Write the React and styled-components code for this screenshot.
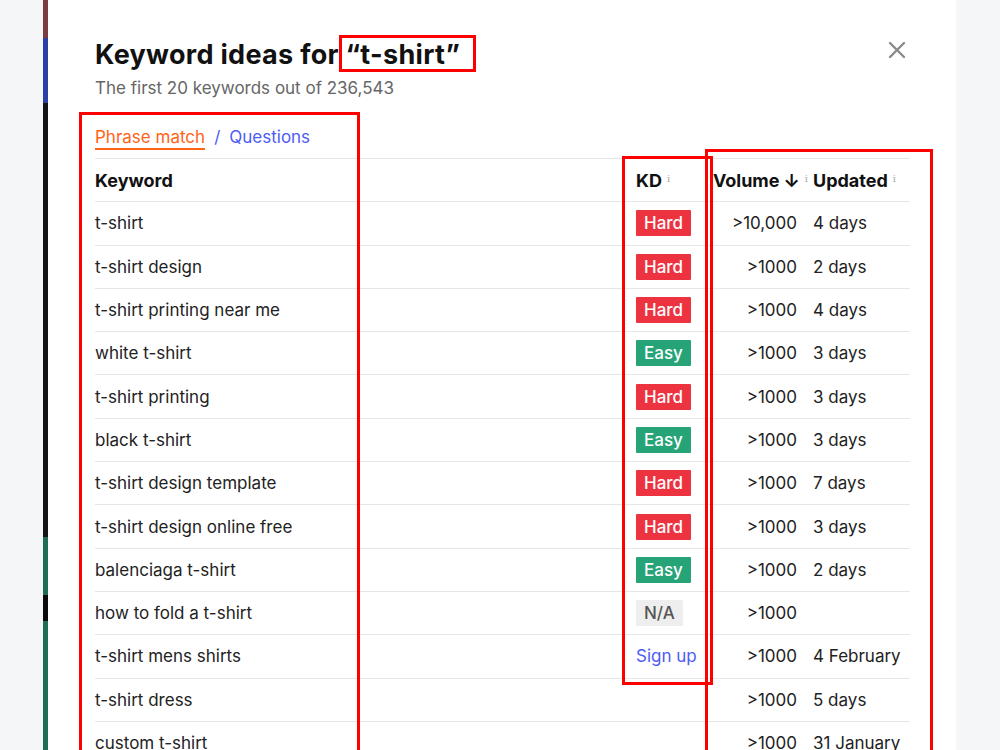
import React from 'react';
import styled, { createGlobalStyle } from 'styled-components';

const GlobalStyle = createGlobalStyle`
  html, body {
    margin: 0;
    padding: 0;
    background: #f5f6f8;
    font-family: Inter, "Noto Sans", "Liberation Sans", sans-serif;
    color: #1c1c1c;
  }
`;

const keywords = [
  { name: 't-shirt', kd: 'hard', volume: '>10,000', updated: '4 days' },
  { name: 't-shirt design', kd: 'hard', volume: '>1000', updated: '2 days' },
  { name: 't-shirt printing near me', kd: 'hard', volume: '>1000', updated: '4 days' },
  { name: 'white t-shirt', kd: 'easy', volume: '>1000', updated: '3 days' },
  { name: 't-shirt printing', kd: 'hard', volume: '>1000', updated: '3 days' },
  { name: 'black t-shirt', kd: 'easy', volume: '>1000', updated: '3 days' },
  { name: 't-shirt design template', kd: 'hard', volume: '>1000', updated: '7 days' },
  { name: 't-shirt design online free', kd: 'hard', volume: '>1000', updated: '3 days' },
  { name: 'balenciaga t-shirt', kd: 'easy', volume: '>1000', updated: '2 days' },
  { name: 'how to fold a t-shirt', kd: 'na', volume: '>1000', updated: '' },
  { name: 't-shirt mens shirts', kd: 'signup', volume: '>1000', updated: '4 February' },
  { name: 't-shirt dress', kd: null, volume: '>1000', updated: '5 days' },
  { name: 'custom t-shirt', kd: null, volume: '>1000', updated: '31 January' },
];

// segments of the page peeking out behind the modal
const stripSegments = [
  { color: '#7a3c40', height: 38 },
  { color: '#2b3fa6', height: 65 },
  { color: '#141414', height: 434 },
  { color: '#1f6d55', height: 58 },
  { color: '#0c0c0c', height: 26 },
  { color: '#1f6d55', height: 129 },
];

// red annotation frames drawn over the screenshot
const frames = [
  { left: 339, top: 35, width: 137, height: 37 },
  { left: 79, top: 112, width: 281, height: 660 },
  { left: 622, top: 156, width: 91, height: 529 },
  { left: 705, top: 149, width: 228, height: 620 },
];

const App = () => {
  return (
    <>
      <GlobalStyle />
      <Page>
        <LeftGutter />
        <Strip>
          {stripSegments.map((s, i) => (
            <StripSegment key={i} $color={s.color} $height={s.height} />
          ))}
        </Strip>
        <Modal>
          <Header>
            <div>
              <Title>
                Keyword ideas for <Quoted>“t-shirt”</Quoted>
              </Title>
              <Subtitle>The first 20 keywords out of 236,543</Subtitle>
            </div>
            <CloseButton aria-label="Close">
              <svg width="18" height="18" viewBox="0 0 18 18">
                <path d="M2 2 L16 16 M16 2 L2 16" stroke="#8a8a8a" strokeWidth="2.4" strokeLinecap="round" />
              </svg>
            </CloseButton>
          </Header>

          <Tabs>
            <Tab $active>Phrase match</Tab>
            <TabDivider>/</TabDivider>
            <Tab>Questions</Tab>
          </Tabs>

          <Table>
            <HeaderRow>
              <Cell>Keyword</Cell>
              <Cell>
                KD<Info>i</Info>
              </Cell>
              <NumberCell>
                Volume <Arrow>↓</Arrow>
                <Info $trail>i</Info>
              </NumberCell>
              <UpdatedCell>
                Updated<Info>i</Info>
              </UpdatedCell>
            </HeaderRow>
            {keywords.map((k) => (
              <Row key={k.name}>
                <Cell>{k.name}</Cell>
                <Cell>
                  {k.kd === 'hard' && <Badge $kind="hard">Hard</Badge>}
                  {k.kd === 'easy' && <Badge $kind="easy">Easy</Badge>}
                  {k.kd === 'na' && <Badge $kind="na">N/A</Badge>}
                  {k.kd === 'signup' && <SignUp href="#">Sign up</SignUp>}
                </Cell>
                <NumberCell>{k.volume}</NumberCell>
                <UpdatedCell>{k.updated}</UpdatedCell>
              </Row>
            ))}
          </Table>
        </Modal>
        <RightGutter />
        {frames.map((f, i) => (
          <Frame
            key={i}
            style={{ left: f.left, top: f.top, width: f.width, height: f.height }}
          />
        ))}
      </Page>
    </>
  );
};

const Page = styled.div`
  position: relative;
  display: flex;
  height: 750px;
  overflow: hidden;
`;

const LeftGutter = styled.div`
  flex: 0 0 43px;
  background: #f5f6f8;
`;

const RightGutter = styled.div`
  flex: 1;
  background: #f5f6f8;
`;

const Strip = styled.div`
  flex: 0 0 5px;
  display: flex;
  flex-direction: column;
`;

const StripSegment = styled.div`
  flex: 0 0 ${({ $height }) => $height}px;
  background: ${({ $color }) => $color};
`;

const Modal = styled.div`
  flex: 0 0 908px;
  background: #fff;
  padding: 38px 46px 0 47px;
  box-sizing: border-box;
`;

const Header = styled.div`
  display: flex;
  justify-content: space-between;
  align-items: flex-start;
`;

const Title = styled.h1`
  margin: 0;
  font-size: 27px;
  line-height: 34px;
  font-weight: 700;
  color: #111;
  letter-spacing: 0.3px;
`;

const Quoted = styled.span`
  font-weight: 700;
`;

const Subtitle = styled.div`
  margin-top: 5px;
  font-size: 17px;
  line-height: 22px;
  color: #666;
`;

const CloseButton = styled.button`
  border: none;
  background: none;
  padding: 0;
  margin: 3px 4px 0 0;
  cursor: pointer;
  display: flex;
`;

const Tabs = styled.div`
  display: flex;
  align-items: flex-start;
  gap: 9px;
  margin-top: 28px;
  font-size: 17px;
  line-height: 20px;
`;

const Tab = styled.span`
  color: ${({ $active }) => ($active ? '#ff6316' : '#4d5bf7')};
  padding-bottom: 1px;
  border-bottom: 2px solid ${({ $active }) => ($active ? '#ff6316' : 'transparent')};
`;

const TabDivider = styled.span`
  color: #4d5bf7;
`;

const Table = styled.div`
  margin-top: 8px;
  font-size: 17px;
`;

const Row = styled.div`
  display: grid;
  grid-template-columns: 541px 66px 95px 113px;
  align-items: center;
  height: 43.3px;
  box-sizing: border-box;
  border-top: 1px solid #e6e6e6;
  color: #222;
`;

const HeaderRow = styled(Row)`
  font-weight: 700;
  font-size: 18px;
  color: #111;
`;

const Cell = styled.div`
  display: flex;
  align-items: center;
  white-space: nowrap;
`;

const NumberCell = styled(Cell)`
  justify-content: flex-end;
`;

const UpdatedCell = styled(Cell)`
  padding-left: 16px;
`;

const Arrow = styled.span`
  margin-left: 4px;
  font-weight: 700;
`;

const Info = styled.span`
  font-family: "DejaVu Serif", serif;
  font-weight: 400;
  font-size: 10px;
  color: #a8a8a8;
  margin-left: 5px;
  margin-top: -4px;
  margin-right: ${({ $trail }) => ($trail ? '-11px' : '0')};
`;

const badgeColors = {
  hard: { bg: '#ee3340', fg: '#fff' },
  easy: { bg: '#26a377', fg: '#fff' },
  na: { bg: '#eeeeee', fg: '#555' },
};

const Badge = styled.span`
  display: inline-block;
  height: 26px;
  line-height: 26px;
  padding: 0 8px;
  font-weight: 500;
  border-radius: 1px;
  background: ${({ $kind }) => badgeColors[$kind].bg};
  color: ${({ $kind }) => badgeColors[$kind].fg};
`;

const SignUp = styled.a`
  color: #4d5bf7;
  text-decoration: none;
`;

const Frame = styled.div`
  position: absolute;
  box-sizing: border-box;
  border: 3px solid #ff0000;
  pointer-events: none;
`;

export default App;
